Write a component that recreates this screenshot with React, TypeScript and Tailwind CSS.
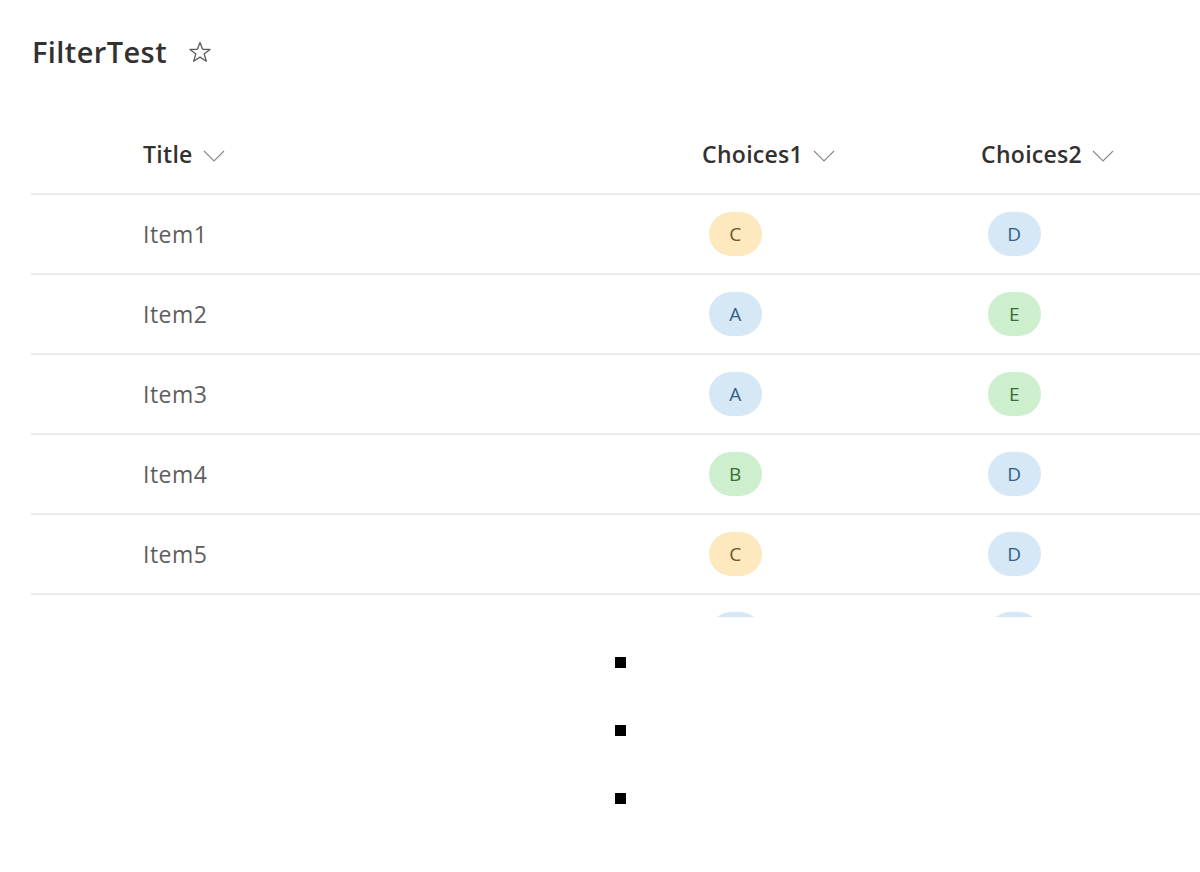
import React from "react";

type Tone = "yellow" | "blue" | "green";

const rows: { title: string; c1: [string, Tone]; c2: [string, Tone] }[] = [
  { title: "Item1", c1: ["C", "yellow"], c2: ["D", "blue"] },
  { title: "Item2", c1: ["A", "blue"], c2: ["E", "green"] },
  { title: "Item3", c1: ["A", "blue"], c2: ["E", "green"] },
  { title: "Item4", c1: ["B", "green"], c2: ["D", "blue"] },
  { title: "Item5", c1: ["C", "yellow"], c2: ["D", "blue"] },
];

const toneClass: Record<Tone, string> = {
  yellow: "bg-[#fde9bd] text-[#6b5a2c]",
  blue: "bg-[#d6e7f6] text-[#2f5f8c]",
  green: "bg-[#cdefcd] text-[#3a6e36]",
};

function Chevron() {
  return (
    <svg width="22" height="12" viewBox="0 0 22 12" className="ml-[10px] mt-[2px]">
      <polyline points="1,1 11,11 21,1" fill="none" stroke="#8a8886" strokeWidth="1.1" />
    </svg>
  );
}

function Star() {
  return (
    <svg width="24" height="22" viewBox="0 0 24 22" className="ml-[21px]">
      <polygon
        points="12,1.5 14.6,8.3 22,8.5 16.2,13 18.3,20.3 12,16.1 5.7,20.3 7.8,13 2,8.5 9.4,8.3"
        fill="none"
        stroke="#605e5c"
        strokeWidth="1.3"
        strokeLinejoin="round"
      />
    </svg>
  );
}

function Pill({ label, tone }: { label?: string; tone: Tone }) {
  return (
    <span
      className={`flex h-[44px] w-[53px] items-center justify-center rounded-full text-[19px] ${toneClass[tone]}`}
    >
      {label}
    </span>
  );
}

function Divider() {
  return <div className="h-[2px] bg-[#eeecea]" />;
}

const cols = "grid grid-cols-[112px_559px_279px_1fr] items-center";

export default function App() {
  return (
    <div
      className="h-[872px] w-[1200px] overflow-hidden bg-white text-[#323130]"
      style={{ fontFamily: '"Open Sans", "Noto Sans", sans-serif' }}
    >
      <div className="mt-[32px] flex h-[40px] items-center pl-[32px]">
        <h1 className="text-[29px] font-semibold tracking-[0.4px] text-[#323130]">FilterTest</h1>
        <Star />
      </div>

      <div className="ml-[31px] mt-[44px] h-[501px] overflow-hidden">
        <div className={`${cols} h-[77px] text-[23px] font-semibold tracking-[0.3px]`}>
          <div />
          <div className="flex items-center">
            Title
            <Chevron />
          </div>
          <div className="flex items-center">
            Choices1
            <Chevron />
          </div>
          <div className="flex items-center">
            Choices2
            <Chevron />
          </div>
        </div>
        <Divider />
        {rows.map((r) => (
          <div key={r.title}>
            <div className={`${cols} h-[78px] text-[23px] tracking-[0.5px] text-[#605e5c]`}>
              <div />
              <div>{r.title}</div>
              <div className="pl-[7px]">
                <Pill label={r.c1[0]} tone={r.c1[1]} />
              </div>
              <div className="pl-[7px]">
                <Pill label={r.c2[0]} tone={r.c2[1]} />
              </div>
            </div>
            <Divider />
          </div>
        ))}
        <div className={`${cols} h-[78px]`}>
          <div />
          <div />
          <div className="pl-[7px]">
            <Pill tone="blue" />
          </div>
          <div className="pl-[7px]">
            <Pill tone="blue" />
          </div>
        </div>
      </div>

      <div className="mt-[40px] flex flex-col gap-[57px] pl-[615px]">
        <div className="h-[11px] w-[11px] bg-black" />
        <div className="h-[11px] w-[11px] bg-black" />
        <div className="h-[11px] w-[11px] bg-black" />
      </div>
    </div>
  );
}
